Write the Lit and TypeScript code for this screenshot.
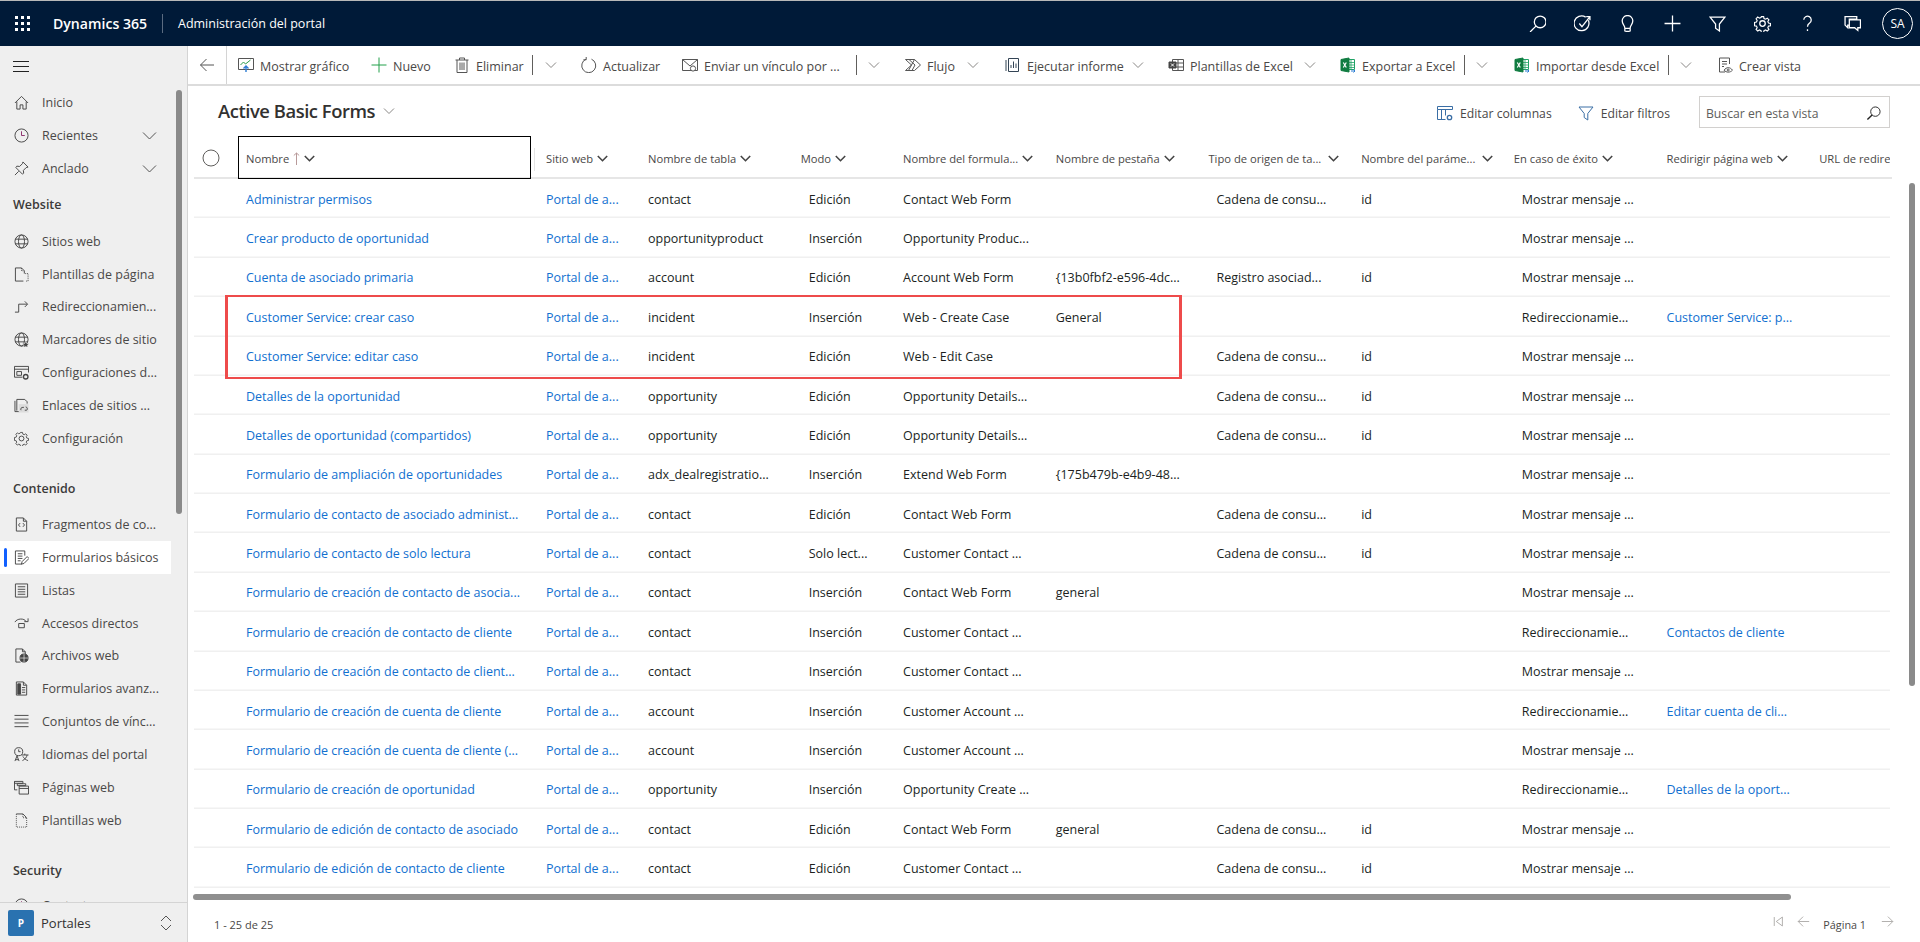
import { LitElement, html, css, svg } from 'lit';
import { customElement } from 'lit/decorators.js';

const icon = (body: unknown, size = 16) => html`<svg width=${size} height=${size} viewBox="0 0 16 16" fill="none" stroke="currentColor">${body}</svg>`;

const chev = html`<svg class="chev" width="12" height="8" viewBox="0 0 12 8" fill="none" stroke="currentColor"><path d="M1 1.5l5 5 5-5"/></svg>`;
const boldChev = html`<svg class="hchev" width="11" height="7" viewBox="0 0 11 7" fill="none" stroke="currentColor" stroke-width="1.6"><path d="M.8 1l4.7 4.7L10.2 1"/></svg>`;
const arrowLeft = svg`<path d="M15 8H1.5M7.5 2l-6 6 6 6"/>`;
const arrowRight = svg`<path d="M1 8h13.5M8.5 2l6 6-6 6"/>`;
const funnel = svg`<path d="M1 2h14L9.8 8.5V15l-3.6-2.5v-4z"/>`;

const excel = svg`
  <path d="M7 2.5h7.5v10H7" stroke="#21a366"/><path d="M9 5.5h5M9 8h5M9 10.5h5M11 3v9" stroke="#21a366" stroke-width=".8"/>
  <path d="M1 2.5L9 1v14l-8-1.5z" fill="#107c41" stroke="#107c41"/>
  <path d="M3.3 5.5l3 5M6.3 5.5l-3 5" stroke="#fff" stroke-width="1.2"/>
  <path d="M11 14h4M13.5 12.5L15 14l-1.5 1.5" stroke="#2b7cd3"/>`;

const tbIcons: Record<string, unknown> = {
  chart: svg`<path d="M.5 1.5h15v11H.5z" stroke="#555"/><path d="M2.5 8l3-3 2 2 5-4" stroke="#2a9d4a"/><path d="M8 15V9M5.5 11.5L8 9l2.5 2.5" stroke="#2b7cd3" stroke-width="1.4"/>`,
  plus: svg`<path d="M8 .5v15M.5 8h15" stroke="#22a04a"/>`,
  trash: svg`<path d="M1.5 3h13M5.5 3V1h5v2M3 3v12.5h10V3M6 5.5V13M8 5.5V13M10 5.5V13"/>`,
  refresh: svg`<path d="M10.5 2.2a7 7 0 1 1-5.500 0M5.200 0v2.800H2.400"/>`,
  mail: svg`<path d="M.5 2.5h15v11H.5zM.5 2.5L8 9l7.500-6.500"/><circle cx="11" cy="11.5" r="2.600" fill="#fff"/>`,
  flow: svg`<path d="M.5 2.500h9l6 5.500-6 5.500h-9l6-5.500zM9.500 2.500l-6 11M4 2.500l6 5.500-3 5.500"/>`,
  report: svg`<path d="M3.5 1.500h10v13h-10zM1 3v11M6 11V8M8.5 11V4.500M11 11V6.500" stroke="#345"/>`,
  template: svg`<path d="M4.5 2.500h11v11h-11zM4.500 6h11M4.500 10h11M10 2.500v11"/><path d="M1 5h7v6H1z" fill="#444" stroke="#444"/><path d="M3 6.500l3 3M6 6.500l-3 3" stroke="#fff"/>`,
  excel,
  view: svg`<path d="M8 15H2.500V1h10v6M5 4.500h5M5 7h5M5 9.500h2"/><path d="M7 13.200c2.500-3.400 6-3.400 8.500 0-2.500 2.600-6 2.600-8.500 0z"/><circle cx="11.200" cy="13" r="1"/>`,
};

// w: distance to the next button, sep/chev: where the splitter and the caret sit inside the button
const toolbar: { i: string; t: string; w: number; sep?: number; chev?: number }[] = [
  { i: 'chart', t: 'Mostrar gráfico', w: 133 },
  { i: 'plus', t: 'Nuevo', w: 83 },
  { i: 'trash', t: 'Eliminar', w: 127, sep: 78, chev: 91 },
  { i: 'refresh', t: 'Actualizar', w: 101 },
  { i: 'mail', t: 'Enviar un vínculo por ...', w: 223, sep: 174, chev: 186 },
  { i: 'flow', t: 'Flujo', w: 100, chev: 62 },
  { i: 'report', t: 'Ejecutar informe', w: 163, chev: 127 },
  { i: 'template', t: 'Plantillas de Excel', w: 172, chev: 136 },
  { i: 'excel', t: 'Exportar a Excel', w: 174, sep: 124, chev: 136 },
  { i: 'excel', t: 'Importar desde Excel', w: 203, sep: 154, chev: 166 },
  { i: 'view', t: 'Crear vista', w: 90 },
];

const gearPath = svg`<circle cx="8" cy="8" r="2.600"/><path d="M6.800.8h2.400l.4 2 1.600.7 1.800-1.100 1.700 1.700-1.100 1.800.7 1.600 2 .4v2.400l-2 .4-.7 1.600 1.100 1.800-1.700 1.700-1.800-1.100-1.600.7-.4 2H6.800l-.4-2-1.600-.7-1.800 1.100-1.700-1.700 1.100-1.800-.7-1.600-2-.4V6.800l2-.4.7-1.600L1.300 3 3 1.300l1.800 1.100 1.600-.7z" transform="translate(.8 .8) scale(.9)"/>`;

const nav: Record<string, unknown> = {
  home: svg`<path d="M1 8.500L8 1.500l7 7M3 7v8h3.500v-4.500h3V15H13V7"/>`,
  clock: svg`<circle cx="8" cy="8" r="7"/><path d="M8 3.500V8h3.500" stroke="#8a2a6a"/>`,
  pin: svg`<path d="M9.500 1l5.500 5.500-2 .5-3 3 .3 3L9 14 2 7l1-1.500 3 .3 3-3zM5 11l-4 4"/>`,
  globe: svg`<circle cx="8" cy="8" r="7"/><ellipse cx="8" cy="8" rx="3.200" ry="7"/><path d="M1.200 5.500h13.600M1.200 10.500h13.600"/>`,
  page: svg`<path d="M10 15H1.500V1H8l3 3v3"/><path d="M8 1v3h3M12 7h3v8h-3" stroke-dasharray="1 1"/>`,
  redirect: svg`<path d="M1 14h4V5.500h9M11.500 2.500l3 3-3 3"/>`,
  globestar: svg`<circle cx="8" cy="8" r="7"/><ellipse cx="8" cy="8" rx="3.200" ry="7"/><path d="M1.200 5.500h13.600M1.200 10.500h13.600"/><path d="M12.500 10l1.200 2.300 2.300.3-1.700 1.600.4 2.300-2.200-1.100-2.200 1.100.4-2.300L9 12.600l2.300-.3z" fill="#444" stroke="#efefef" stroke-width=".6"/>`,
  siteset: svg`<path d="M9 13H.5V1.500h15V8M.5 4.500h15"/><path d="M3 7h5v4H3z"/><circle cx="12.500" cy="12.500" r="2.400" stroke-width="1.400"/>`,
  link: svg`<path d="M3 13.500V1.500h8.500L14 4v2M1 3v11.500h5"/><rect x="5" y="6.500" width="10.500" height="9" fill="#dcdcdc" stroke="none"/><path d="M7.500 13a2 2 0 0 1 2-3h1M12.500 9.500a2 2 0 0 1 1 3.500h-2"/>`,
  gear: gearPath,
  code: svg`<path d="M2.500 1H10l3.500 3.500V15h-11zM10 1v3.500h3.500M6.500 6.500L4.800 8.500l1.700 2M9.500 6.500l1.700 2-1.700 2"/>`,
  form: svg`<path d="M11.500 6V1h-10v14h7M4 4h5M4 6.500h5M4 9h5M4 11.500h3"/><path d="M8 15l.6-2.600L14 7l2 2-5.400 5.400z"/>`,
  list: svg`<path d="M1.500 1h13v14h-13zM4 4h8M4 6.700h8M4 9.400h8M4 12h8"/>`,
  shortcut: svg`<path d="M1 6.500C3 2.500 11 2 13 6M11 6h4V2.500M5 8h6v4.500H5z"/>`,
  webfile: svg`<path d="M7 15H2V1h7l3 3v2.500M9 1v3h3"/><circle cx="10.700" cy="10.700" r="4.300" fill="#444"/><path d="M6.500 10.700H15M10.700 6.500V15" stroke="#efefef" stroke-width=".7"/>`,
  advform: svg`<path d="M2.500 1H10l3.500 3.500V15h-11zM10 1v3.500h3.500"/><path d="M4 3h3v11H4z" fill="#444"/><path d="M8.500 7H12M8.500 9.500H12M8.500 12H12"/>`,
  lines: svg`<path d="M.5 1.500h15M.5 5.500h15M.5 9.500h15M.5 13.500h15"/>`,
  lang: svg`<circle cx="5" cy="5" r="4.300"/><path d="M5 2.500V5h2M1 15l2.200-5.500L5.400 15M1.800 13.500h2.800M8 8.500h7.500M11.500 7v1.500M9 14.500c3-1.500 4.500-3.500 5-6M9.500 10c1 2 3 3.700 5.500 4.500"/>`,
  pages: svg`<path d="M.5 1.500h9v2H.5zM.5 1.500v9h3"/><path d="M3.500 4h9v2h-9z"/><path d="M5.500 6.500h10V15h-10zM5.500 9h10"/>`,
  dotted: svg`<path d="M2.500 1h7l4 4"/><path d="M9.500 1v4h4V15h-11V1" stroke-dasharray="1 1.100"/>`,
};

type NavEntry = [string, string, number?, number?];
const menu1: NavEntry[] = [['home', 'Inicio'], ['clock', 'Recientes', 1], ['pin', 'Anclado', 1]];
const website: NavEntry[] = [
  ['globe', 'Sitios web'], ['page', 'Plantillas de página'], ['redirect', 'Redireccionamien...'], ['globestar', 'Marcadores de sitio'],
  ['siteset', 'Configuraciones d...'], ['link', 'Enlaces de sitios ...'], ['gear', 'Configuración'],
];
const content: NavEntry[] = [
  ['code', 'Fragmentos de co...'], ['form', 'Formularios básicos', 0, 1], ['list', 'Listas'], ['shortcut', 'Accesos directos'],
  ['webfile', 'Archivos web'], ['advform', 'Formularios avanz...'], ['lines', 'Conjuntos de vínc...'], ['lang', 'Idiomas del portal'],
  ['pages', 'Páginas web'], ['dotted', 'Plantillas web'],
];

const cols: { t: string; w: number; cls?: string; wide?: boolean }[] = [
  { t: 'Nombre', w: 300, cls: 'name' },
  { t: 'Sitio web', w: 102 },
  { t: 'Nombre de tabla', w: 152.7 },
  { t: 'Modo', w: 102.4, cls: 'ind' },
  { t: 'Nombre del formula...', w: 152.7 },
  { t: 'Nombre de pestaña', w: 152.7 },
  { t: 'Tipo de origen de ta...', w: 152.7, cls: 'ind', wide: true },
  { t: 'Nombre del paráme...', w: 152.7, wide: true },
  { t: 'En caso de éxito', w: 152.7, cls: 'ind' },
  { t: 'Redirigir página web', w: 152.7 },
  { t: 'URL de redirec', w: 83 },
];
const gridCols = '40px ' + cols.map((c) => c.w + 'px').join(' ');

const P = 'Portal de a...';
const OK = 'Mostrar mensaje ...';
const RD = 'Redireccionamie...';
const Q = 'Cadena de consu...';
const rows: string[][] = [
  ['Administrar permisos', P, 'contact', 'Edición', 'Contact Web Form', '', Q, 'id', OK, ''],
  ['Crear producto de oportunidad', P, 'opportunityproduct', 'Inserción', 'Opportunity Produc...', '', '', '', OK, ''],
  ['Cuenta de asociado primaria', P, 'account', 'Edición', 'Account Web Form', '{13b0fbf2-e596-4dc...', 'Registro asociad...', 'id', OK, ''],
  ['Customer Service: crear caso', P, 'incident', 'Inserción', 'Web - Create Case', 'General', '', '', RD, 'Customer Service: p...'],
  ['Customer Service: editar caso', P, 'incident', 'Edición', 'Web - Edit Case', '', Q, 'id', OK, ''],
  ['Detalles de la oportunidad', P, 'opportunity', 'Edición', 'Opportunity Details...', '', Q, 'id', OK, ''],
  ['Detalles de oportunidad (compartidos)', P, 'opportunity', 'Edición', 'Opportunity Details...', '', Q, 'id', OK, ''],
  ['Formulario de ampliación de oportunidades', P, 'adx_dealregistratio...', 'Inserción', 'Extend Web Form', '{175b479b-e4b9-48...', '', '', OK, ''],
  ['Formulario de contacto de asociado administ...', P, 'contact', 'Edición', 'Contact Web Form', '', Q, 'id', OK, ''],
  ['Formulario de contacto de solo lectura', P, 'contact', 'Solo lect...', 'Customer Contact ...', '', Q, 'id', OK, ''],
  ['Formulario de creación de contacto de asocia...', P, 'contact', 'Inserción', 'Contact Web Form', 'general', '', '', OK, ''],
  ['Formulario de creación de contacto de cliente', P, 'contact', 'Inserción', 'Customer Contact ...', '', '', '', RD, 'Contactos de cliente'],
  ['Formulario de creación de contacto de client...', P, 'contact', 'Inserción', 'Customer Contact ...', '', '', '', OK, ''],
  ['Formulario de creación de cuenta de cliente', P, 'account', 'Inserción', 'Customer Account ...', '', '', '', RD, 'Editar cuenta de cli...'],
  ['Formulario de creación de cuenta de cliente (...', P, 'account', 'Inserción', 'Customer Account ...', '', '', '', OK, ''],
  ['Formulario de creación de oportunidad', P, 'opportunity', 'Inserción', 'Opportunity Create ...', '', '', '', RD, 'Detalles de la oport...'],
  ['Formulario de edición de contacto de asociado', P, 'contact', 'Edición', 'Contact Web Form', 'general', Q, 'id', OK, ''],
  ['Formulario de edición de contacto de cliente', P, 'contact', 'Edición', 'Customer Contact ...', '', Q, 'id', OK, ''],
];

@customElement('app-root')
export class AppRoot extends LitElement {
  static styles = css`
    :host {
      display: flex;
      flex-direction: column;
      height: 942px;
      width: 1920px;
      overflow: hidden;
      position: relative;
      font-family: 'Open Sans', 'Noto Sans', sans-serif;
      font-size: 12.5px;
      color: #323130;
      background: #fff;
    }
    svg { flex: none; display: block; }

    .topbar {
      flex: none;
      height: 46px;
      box-sizing: border-box;
      border-top: 1px solid #b8b8b8;
      background: #001a38;
      color: #fff;
      display: flex;
      align-items: center;
    }
    .waffle { width: 15px; height: 15px; margin-left: 15px; display: grid; grid-template-columns: repeat(3, 3px); gap: 3px; }
    .waffle i { background: #fff; }
    .brand { margin-left: 23px; font-size: 14.1px; font-weight: 600; width: 95px; white-space: nowrap; }
    .divider { width: 1px; height: 19px; background: #5b6b80; margin: 0 15px 0 14px; }
    .app { font-size: 12.5px; white-space: nowrap; }
    .acts { margin-left: auto; display: flex; align-items: center; }
    .act { width: 45px; height: 45px; display: flex; align-items: center; justify-content: center; }
    .act path, .act circle { stroke-width: 1.2; }
    .avatar {
      width: 29px; height: 29px; border: 1px solid #fff; border-radius: 50%;
      display: flex; align-items: center; justify-content: center;
      font-size: 12px; margin: 0 7px;
    }

    .body { flex: 1; display: flex; min-height: 0; }
    .side {
      flex: none;
      width: 188px;
      box-sizing: border-box;
      background: #efefef;
      border-right: 1px solid #d4d4d4;
      position: relative;
      display: flex;
      flex-direction: column;
      overflow: hidden;
    }
    .side-scroll { flex: 1; min-height: 0; overflow: hidden; }
    .burger { height: 40px; display: flex; align-items: center; padding-left: 13px; box-sizing: border-box; }
    .burger svg { color: #222; }
    .nav-item {
      height: 32.9px;
      width: 171px;
      display: flex;
      align-items: center;
      padding-left: 14px;
      box-sizing: border-box;
      position: relative;
      color: #4a4847;
      white-space: nowrap;
    }
    .nav-item svg.ic { color: #444; margin-right: 13px; }
    .nav-item .nav-chev { margin-left: auto; margin-right: 14px; color: #555; }
    .nav-item.on { background: #fff; }
    .nav-item.on::before {
      content: '';
      position: absolute;
      left: 4px; top: 7px; bottom: 7px; width: 3px;
      background: #1160ff;
      border-radius: 2px;
    }
    .group { font-weight: 600; color: #3b3a39; padding-left: 13px; height: 17px; line-height: 17px; }
    .g1 { margin-top: 11px; margin-bottom: 12px; }
    .g2 { margin-top: 25px; margin-bottom: 11px; }
    .g3 { margin-top: 25px; margin-bottom: 10px; }
    .side-thumb {
      position: absolute; left: 176px; top: 44px; width: 6px; height: 424px;
      background: #8a8a8a; border-radius: 3px;
    }
    .side-foot {
      flex: none;
      height: 39px;
      border-top: 1px solid #d4d4d4;
      background: #efefef;
      display: flex;
      align-items: center;
      padding-left: 8px;
      position: relative;
    }
    .tile {
      width: 26px; height: 26px; border-radius: 2px; background: #2a72b0; color: #fff;
      display: flex; align-items: center; justify-content: center; font-size: 10px; font-weight: 700;
    }
    .foot-name { margin-left: 7px; font-size: 13px; font-weight: 500; }
    .updown { margin-left: auto; margin-right: 15px; color: #555; }

    .main { flex: 1; min-width: 0; display: flex; flex-direction: column; position: relative; }
    .toolbar {
      flex: none;
      height: 40px;
      box-sizing: border-box;
      border-bottom: 2px solid #dcdcdc;
      display: flex;
      align-items: stretch;
      white-space: nowrap;
      color: #4a4847;
    }
    .back { flex: none; width: 38px; border-right: 1px solid #d4d4d4; display: flex; align-items: center; justify-content: center; color: #555; margin-right: 11px; }
    .tb { flex: none; display: flex; align-items: center; position: relative; }
    .tb .ti { margin-right: 6px; color: #555; }
    .tb .lbl { padding-top: 2px; }
    .tb .sep { position: absolute; top: 9px; width: 1px; height: 20px; background: #605e5c; }
    .tb .sc { position: absolute; top: 15px; color: #8a8886; }

    .view-head { flex: none; height: 49px; display: flex; align-items: center; padding-left: 30px; position: relative; }
    .title { font-size: 18.4px; letter-spacing: -0.45px; font-weight: 600; color: #323130; white-space: nowrap; }
    .title-chev { margin-left: 8px; color: #8a8886; }
    .view-acts { margin-left: auto; margin-top: 3px; display: flex; align-items: center; color: #4a4847; padding-right: 30px; font-size: 12.2px; }
    .va { display: flex; align-items: center; gap: 7px; white-space: nowrap; margin-top: 2px; }
    .va svg { color: #3a6ea5; }
    .va + .va { margin-left: 26px; }
    .search {
      margin-left: 29px; width: 191px; height: 32px; box-sizing: border-box;
      border: 1px solid #d2d0ce; display: flex; align-items: center; padding: 2px 8px 0 6px; color: #605e5c;
    }
    .search svg { margin-left: auto; color: #222; }

    .grid { flex: 1; min-height: 0; margin-left: 6px; position: relative; overflow: hidden; }
    .row { display: grid; grid-template-columns: var(--cols); width: 1680px; height: 39.39px; }
    .head { height: 44px; width: 1698px; color: #4a4847; font-size: 11.2px; box-shadow: inset 0 -2px 0 #e6e6e6; }
    .hc {
      display: flex; align-items: center; gap: 4px; padding: 3px 0 0 12px; box-sizing: border-box;
      white-space: nowrap; overflow: hidden; position: relative; min-width: 0;
    }
    .hc.wide { gap: 7px; }
    .hc .hchev { color: #444; }
    .hc.name { outline: 1px solid #000; outline-offset: -1px; margin: 1px 3px 0 4px; padding: 2px 0 0 8px; height: 43px; }
    .check { display: flex; align-items: center; justify-content: center; color: #605e5c; padding: 2px 6px 0 0; }
    .resize { position: absolute; left: 340px; top: 13px; width: 1px; height: 23px; background: #e4e4e4; }
    .cell {
      display: flex; align-items: center; padding: 1px 0 0 12px; white-space: nowrap; overflow: hidden; min-width: 0;
      box-shadow: inset 0 -1.5px 0 #f0f0f0, inset 2px 0 0 #fff;
      color: #201f1e;
    }
    .cell.a { color: #1170d0; }
    .cell.ind { padding-left: 20px; }
    .cell.blank { box-shadow: inset 0 -1.5px 0 #f0f0f0; }

    .mark {
      position: absolute; left: 31px; top: 160px; width: 957px; height: 84px; box-sizing: border-box;
      border: solid #ee4b4b; border-width: 2px 3px; pointer-events: none;
    }
    .vthumb { position: absolute; right: 5px; top: 137px; width: 6px; height: 503px; background: #8a8a8a; border-radius: 3px; }
    .hthumb { flex: none; height: 6px; width: 1598px; margin: 6px 0 0 5px; background: #8f8f8f; border-radius: 3px; }
    .foot { flex: none; height: 42px; box-sizing: border-box; padding: 6px 0 0 26px; display: flex; align-items: center; font-size: 11px; color: #4a4847; }
    .pager { margin-left: auto; display: flex; align-items: center; color: #a19f9d; padding-right: 26px; }
    .pager svg { margin-bottom: 6px; }
    .pager .pg { color: #4a4847; margin: 0 15px 0 13px; font-size: 10.8px; }
    .pager .first { margin-right: 13px; }
  `;

  private navItem([ic, label, hasChev, on]: NavEntry) {
    return html`<div class="nav-item ${on ? 'on' : ''}">
      <svg class="ic" width="15" height="15" viewBox="0 0 16 16" fill="none" stroke="currentColor">${nav[ic]}</svg>
      <span>${label}</span>
      ${hasChev ? html`<svg class="nav-chev" width="15" height="9" viewBox="0 0 15 9" fill="none" stroke="currentColor"><path d="M1 1.500l6.500 6.500L14 1.500"/></svg>` : ''}
    </div>`;
  }

  render() {
    return html`
      <div class="topbar">
        <div class="waffle">${Array.from({ length: 9 }, () => html`<i></i>`)}</div>
        <div class="brand">Dynamics 365</div>
        <div class="divider"></div>
        <div class="app">Administración del portal</div>
        <div class="acts">
          <div class="act">${icon(svg`<circle cx="10.500" cy="6.500" r="5.500"/><path d="M6.500 10.500L1 16"/>`, 17)}</div>
          <div class="act">${icon(svg`<path d="M13.500 5A7 7 0 1 1 11 2"/><path d="M5 8l2.500 3L15 1.500M11.500 1.500H15V5"/>`, 17)}</div>
          <div class="act">${icon(svg`<path d="M5.500 12.500c0-3-2.500-3.500-2.500-7a5 5 0 0 1 10 0c0 3.500-2.500 4-2.500 7zM6 15.500h4M5.500 12.500v3M10.500 12.500v3"/>`, 17)}</div>
          <div class="act">${icon(svg`<path d="M8 .5v15M.5 8h15"/>`, 17)}</div>
          <div class="act">${icon(funnel, 17)}</div>
          <div class="act">${icon(gearPath, 17)}</div>
          <div class="act">${icon(svg`<path d="M4.500 4.500a3.500 3.500 0 1 1 5.500 3c-1.500 1-2 1.800-2 3.500M8 13.500V15"/>`, 17)}</div>
          <div class="act">${icon(svg`<path d="M1 1.500h11V4H5v5.500H3.500V12L1 9.500zM5 4.500h10.500V12H13v2.500L10 12H5z"/>`, 17)}</div>
          <div class="avatar">SA</div>
        </div>
      </div>

      <div class="body">
        <aside class="side">
          <div class="side-scroll">
            <div class="burger"><svg width="16" height="11" viewBox="0 0 16 11" stroke="currentColor"><path d="M0 .5h16M0 5.500h16M0 10.500h16"/></svg></div>
            ${menu1.map((m) => this.navItem(m))}
            <div class="group g1">Website</div>
            ${website.map((m) => this.navItem(m))}
            <div class="group g2">Contenido</div>
            ${content.map((m) => this.navItem(m))}
            <div class="group g3">Security</div>
            ${this.navItem(['clock', 'Contactos'])}
          </div>
          <div class="side-thumb"></div>
          <div class="side-foot">
            <div class="tile">P</div>
            <div class="foot-name">Portales</div>
            <svg class="updown" width="12" height="16" viewBox="0 0 12 16" fill="none" stroke="currentColor"><path d="M1 6l5-5 5 5M1 10l5 5 5-5"/></svg>
          </div>
        </aside>

        <main class="main">
          <div class="toolbar">
            <div class="back">${icon(arrowLeft)}</div>
            ${toolbar.map((b) => html`<div class="tb" style="width:${b.w}px">
              <span class="ti">${icon(tbIcons[b.i])}</span>
              <span class="lbl">${b.t}</span>
              ${b.sep ? html`<span class="sep" style="left:${b.sep}px"></span>` : ''}
              ${b.chev ? html`<span class="sc" style="left:${b.chev}px">${chev}</span>` : ''}
            </div>`)}
          </div>

          <div class="view-head">
            <div class="title">Active Basic Forms</div>
            <svg class="title-chev" width="12" height="8" viewBox="0 0 12 8" fill="none" stroke="currentColor"><path d="M1 1.500l5 5 5-5"/></svg>
            <div class="view-acts">
              <div class="va">${icon(svg`<path d="M.5 1.500h15v3H.5zM.5 4.500v10h8M4.500 4.500v10M8.500 4.500v6"/><circle cx="12.500" cy="12.500" r="2.200" stroke-width="1.300"/>`)} Editar columnas</div>
              <div class="va">${icon(funnel)} Editar filtros</div>
              <div class="search">Buscar en esta vista ${icon(svg`<circle cx="10" cy="6" r="5"/><path d="M6.500 9.500l-5 5" stroke-width="1.500"/>`, 15)}</div>
            </div>
          </div>

          <div class="grid" style="--cols:${gridCols}">
            <div class="row head">
              <div class="check"><svg width="18" height="18" viewBox="0 0 18 18" fill="none" stroke="currentColor"><circle cx="9" cy="9" r="8"/></svg></div>
              ${cols.map((c, i) => html`<div class="hc ${c.cls === 'name' ? 'name' : ''} ${c.wide ? 'wide' : ''}">
                <span>${c.t}</span>
                ${i === 0 ? html`<svg width="7" height="13" viewBox="0 0 7 13" fill="none" stroke="#b89a9a"><path d="M3.500 13V1M.8 3.500L3.500 1l2.700 2.500"/></svg>` : ''}
                ${i < 10 ? boldChev : ''}
              </div>`)}
            </div>
            <div class="resize"></div>
            ${rows.map((r) => html`<div class="row">
              <div class="cell blank"></div>
              ${r.map((v, i) => html`<div class="cell ${i < 2 || i === 9 ? 'a' : ''} ${cols[i].cls === 'ind' ? 'ind' : ''}">${v}</div>`)}
              <div class="cell"></div>
            </div>`)}
            <div class="mark"></div>
          </div>
          <div class="hthumb"></div>
          <div class="foot">
            <span>1 - 25 de 25</span>
            <div class="pager">
              <span class="first">${icon(svg`<path d="M4 2.500v11M14 2.500L6.500 8l7.500 5.500z"/>`, 13)}</span>
              ${icon(arrowLeft, 13)}
              <span class="pg">Página 1</span>
              ${icon(arrowRight, 13)}
            </div>
          </div>
          <div class="vthumb"></div>
        </main>
      </div>
    `;
  }
}
